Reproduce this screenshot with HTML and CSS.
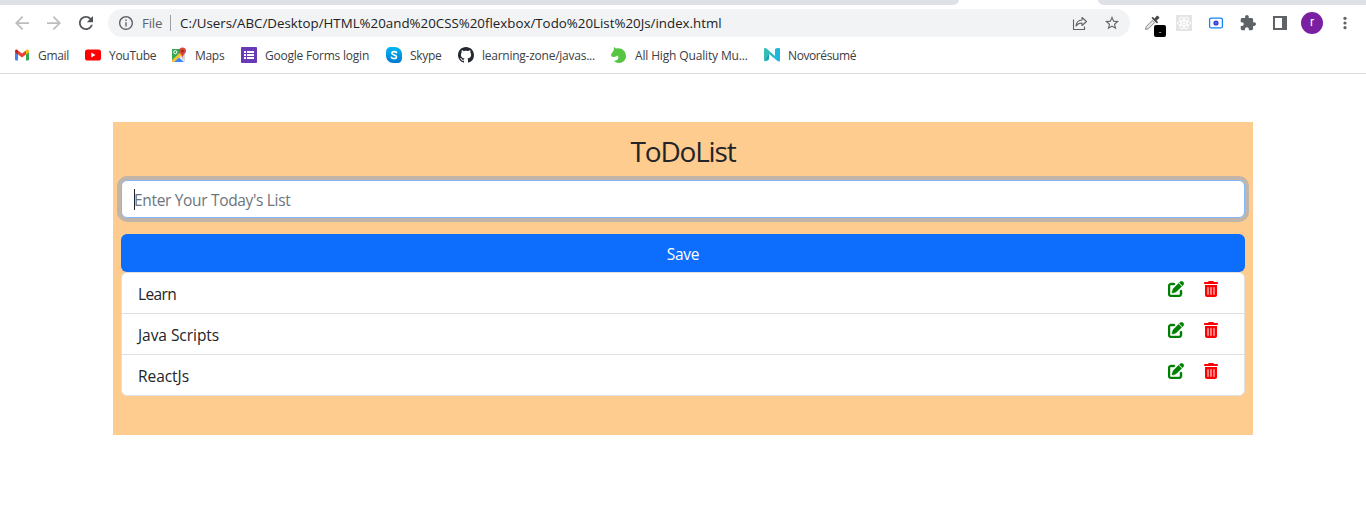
FILE: index.html
```html
<!DOCTYPE html>
<html lang="en">
<head>
<meta charset="utf-8">
<title>ToDoList</title>
<link rel="stylesheet" href="styles.css">
</head>
<body>
<svg class="defs" aria-hidden="true">
  <symbol id="pen" viewBox="0 0 512 512"><path d="M471.6 21.7c-21.9-21.9-57.3-21.9-79.2 0L362.3 51.7l97.9 97.9 30.1-30.1c21.9-21.9 21.9-57.3 0-79.2L471.6 21.7zm-299.2 220c-6.1 6.1-10.8 13.6-13.5 21.9l-29.6 88.8c-2.9 8.6-.6 18.1 5.8 24.6s15.9 8.7 24.6 5.8l88.8-29.6c8.2-2.7 15.7-7.4 21.9-13.5L437.7 172.3 339.7 74.3 172.4 241.7zM96 64C43 64 0 107 0 160V416c0 53 43 96 96 96H352c53 0 96-43 96-96V320c0-17.7-14.3-32-32-32s-32 14.3-32 32v96c0 17.7-14.3 32-32 32H96c-17.7 0-32-14.3-32-32V160c0-17.7 14.3-32 32-32h96c17.7 0 32-14.3 32-32s-14.3-32-32-32H96z"/></symbol>
  <symbol id="trash" viewBox="0 0 448 512"><path d="M135.2 17.7L128 32H32C14.3 32 0 46.3 0 64S14.3 96 32 96H416c17.7 0 32-14.3 32-32s-14.3-32-32-32H320l-7.2-14.3C307.4 6.8 296.3 0 284.2 0H163.8c-12.1 0-23.2 6.8-28.6 17.7zM416 128H32V448c0 35.3 28.7 64 64 64H352c35.3 0 64-28.7 64-64V128zM144 208V432c0 8.8-7.2 16-16 16s-16-7.2-16-16V208c0-8.8 7.2-16 16-16s16 7.2 16 16zm96 0V432c0 8.8-7.2 16-16 16s-16-7.2-16-16V208c0-8.8 7.2-16 16-16s16 7.2 16 16zm96 0V432c0 8.8-7.2 16-16 16s-16-7.2-16-16V208c0-8.8 7.2-16 16-16s16 7.2 16 16z"/></symbol>
</svg>
<header class="chrome">
  <div class="tabs"><div class="tab-left"></div><div class="tab-active"></div><div class="tab-right"></div></div>
  <div class="toolbar">
    <div class="nav">
      <svg class="off" viewBox="4 4 16 16"><path d="M20 11H7.83l5.59-5.59L12 4l-8 8 8 8 1.41-1.41L7.83 13H20v-2z"/></svg>
      <svg class="off" viewBox="4 4 16 16"><path d="M12 4l-1.41 1.41L16.17 11H4v2h12.17l-5.58 5.59L12 20l8-8z"/></svg>
      <svg class="on" viewBox="4 4 16 16"><path d="M17.65 6.35C16.2 4.9 14.21 4 12 4c-4.42 0-7.99 3.58-7.99 8s3.57 8 7.99 8c3.73 0 6.84-2.55 7.73-6h-2.08c-.82 2.33-3.04 4-5.65 4-3.31 0-6-2.69-6-6s2.69-6 6-6c1.66 0 3.14.69 4.22 1.78L13 11h7V4l-2.35 2.35z"/></svg>
    </div>
    <div class="address">
      <svg class="info" viewBox="2 2 20 20"><path d="M11 17h2v-6h-2v6zm1-15C6.48 2 2 6.48 2 12s4.480 10 10 10 10-4.480 10-10S17.520 2 12 2zm0 18c-4.410 0-8-3.590-8-8s3.590-8 8-8 8 3.590 8 8-3.590 8-8 8zM11 9h2V7h-2v2z"/></svg>
      <span class="scheme">File</span>
      <span class="bar"></span>
      <span class="url">C:/Users/ABC/Desktop/HTML%20and%20CSS%20flexbox/Todo%20List%20Js/index.html</span>
      <svg class="share" viewBox="0 0 16 16" fill="none" stroke="#5f6368" stroke-width="1.100"><path d="M1.500 4.500v10h11v-3M10 2.500l4.500 4L10 10.500V8C7 8 5.500 8.700 4 11c.3-3.500 2.500-5.700 6-6z" stroke-linejoin="round"/></svg>
      <svg class="star" viewBox="2 2 20 20"><path d="M22 9.240l-7.190-.62L12 2 9.190 8.630 2 9.240l5.460 4.730L5.820 21 12 17.270 18.180 21l-1.630-7.030L22 9.240zM12 15.400l-3.760 2.270 1-4.280-3.320-2.880 4.380-.38L12 6.100l1.710 4.040 4.380.38-3.320 2.880 1 4.280L12 15.400z"/></svg>
    </div>
    <div class="extensions">
      <div class="picker">
        <svg viewBox="0 0 16 16"><path d="M1.500 14.500l.8-3L8.500 5.300l2.200 2.200-6.200 6.200z" fill="#e4e4e4" stroke="#888" stroke-width="1"/><path d="M7.500 3l5.500 5.500 1.200-1.200L12.500 5.500l2.500-2c1.200-1.200-1.300-3.700-2.500-2.500l-2 2.500-1.800-1.700z" fill="#4a4a4a"/></svg>
        <span class="badge">-</span>
      </div>
      <svg viewBox="0 0 16 16"><path fill="#e4e4e4" d="M0 0h16v16H0z"/><g fill="none" stroke="#fff"><ellipse cx="8" cy="8" rx="6.500" ry="2.500"/><ellipse cx="8" cy="8" rx="6.500" ry="2.500" transform="rotate(60 8 8)"/><ellipse cx="8" cy="8" rx="6.500" ry="2.500" transform="rotate(120 8 8)"/></g><circle cx="8" cy="8" r="1.200" fill="#fff"/></svg>
      <svg viewBox="0 0 16 16"><rect x="1.600" y="3.100" width="12.800" height="9.800" rx="1.500" fill="#fff" stroke="#1683f5" stroke-width="1.300"/><circle cx="8" cy="8" r="2.600" fill="#3840d8"/><circle cx="8" cy="8" r=".8" fill="#8088ff"/></svg>
      <svg viewBox="1 1 22 22" fill="#5f6368"><path d="M20.500 11H19V7c0-1.100-.9-2-2-2h-4V3.500C13 2.120 11.880 1 10.500 1S8 2.120 8 3.500V5H4c-1.100 0-1.990.9-1.990 2v3.800H3.500c1.490 0 2.700 1.210 2.700 2.700s-1.210 2.700-2.700 2.700H2V20c0 1.100.9 2 2 2h3.800v-1.500c0-1.490 1.210-2.700 2.700-2.700s2.700 1.210 2.700 2.700V22H17c1.100 0 2-.9 2-2v-4h1.500c1.380 0 2.500-1.120 2.500-2.500S21.880 11 20.500 11z"/></svg>
      <svg viewBox="0 0 16 16"><path fill="#5f6368" fill-rule="evenodd" d="M1 1h14v14H1zM3 3v10h7V3z"/></svg>
      <div class="avatar">r</div>
      <svg viewBox="0 0 16 16" fill="#5f6368"><circle cx="8" cy="3.300" r="1.600"/><circle cx="8" cy="8" r="1.600"/><circle cx="8" cy="12.700" r="1.600"/></svg>
    </div>
  </div>
  <nav class="bookmarks">
    <a class="gmail"><svg viewBox="0 0 16 16"><path fill="#4285f4" d="M1 5l3 2v6.500H2.200A1.200 1.200 0 0 1 1 12.300z"/><path fill="#34a853" d="M12 7l3-2v7.300a1.200 1.200 0 0 1-1.200 1.200H12z"/><path fill="#ea4335" d="M4 3.500l4 3 4-3v4l-4 3-4-3z"/><path fill="#c5221f" d="M1 4.200c0-1.500 1.500-2 2.500-1.200l.5.500v4L1 5.300z"/><path fill="#fbbc04" d="M15 4.200c0-1.500-1.500-2-2.500-1.200l-.5.500v4l3-2.200z"/></svg><span>Gmail</span></a>
    <a class="youtube"><svg viewBox="0 0 16 16"><rect y="2.500" width="16" height="11" rx="2.600" fill="#f00"/><path fill="#fff" d="M6.300 5.600v4.800L10.500 8z"/></svg><span>YouTube</span></a>
    <a class="maps"><svg viewBox="0 0 16 16"><path fill="#34a853" d="M1 2h11v2L2 14H1z"/><path fill="#fbc02d" d="M1 13L12 3l2 2-6 6-5 4H1z"/><path fill="#4285f4" d="M3 15l5-4.500 5 4.500z"/><path fill="#cfd8dc" d="M9 10l4-4 1 1v8z"/><circle cx="4.300" cy="5.200" r="1.600" fill="none" stroke="#fff"/><path fill="#db4437" d="M11.500.5A3.500 3.500 0 0 0 8 4c0 2.500 3 3.300 3.500 7 .5-3.700 3.500-4.500 3.500-7A3.500 3.500 0 0 0 11.500.5z"/><circle cx="11.500" cy="4" r="1.200" fill="#84261f"/></svg><span>Maps</span></a>
    <a class="forms"><svg viewBox="0 0 16 16"><rect width="16" height="16" rx=".8" fill="#673ab7"/><path fill="#fff" d="M3 4h2v2H3zm3 0h7v2H6zM3 7h2v2H3zm3 0h7v2H6zm-3 3h2v2H3zm3 0h7v2H6z"/></svg><span>Google Forms login</span></a>
    <a class="skype"><svg viewBox="0 0 16 16"><defs><linearGradient id="sky" x2="0" y2="1"><stop stop-color="#00b7f0"/><stop offset="1" stop-color="#0078d4"/></linearGradient></defs><path fill="url(#sky)" d="M4.500 0h4C13 0 16 3.500 16 7.500V11c0 3-2 5-4.500 5h-4C3 16 0 12.500 0 8.500V5c0-3 2-5 4.500-5z"/><path d="M10.500 5.600C10 4.400 5.900 4.100 5.900 6.200c0 2.300 4.600 1.200 4.600 3.500 0 2.400-4.600 2.200-5.100.5" fill="none" stroke="#fff" stroke-width="1.600" stroke-linecap="round"/></svg><span>Skype</span></a>
    <a class="github"><svg viewBox="0 0 16 16"><path fill="#24292f" d="M8 0C3.580 0 0 3.580 0 8c0 3.540 2.290 6.530 5.470 7.590.4.070.55-.17.55-.38 0-.19-.01-.82-.01-1.490-2.010.37-2.530-.49-2.690-.94-.09-.23-.48-.94-.82-1.130-.28-.15-.68-.52-.01-.53.63-.01 1.080.58 1.230.82.72 1.210 1.870.87 2.330.66.07-.52.28-.87.51-1.070-1.780-.2-3.640-.89-3.640-3.950 0-.87.31-1.590.82-2.150-.08-.2-.36-1.020.08-2.120 0 0 .67-.21 2.200.82.64-.18 1.320-.27 2-.27s1.360.09 2 .27c1.530-1.040 2.200-.82 2.200-.82.44 1.100.16 1.920.08 2.120.51.56.82 1.270.82 2.150 0 3.070-1.870 3.750-3.650 3.950.29.25.54.73.54 1.480 0 1.070-.01 1.930-.01 2.200 0 .21.15.46.55.38A8.010 8.010 0 0 0 16 8c0-4.420-3.580-8-8-8z"/></svg><span>learning-zone/javas...</span></a>
    <a class="quality"><svg viewBox="0 0 16 16"><path fill="#57c443" d="M3 0l2 1.500C10.500.300 15 4 15 9c0 4-3 7-7 7-2.200 0-4-.8-5-2.200 2.500.2 4.500-1.300 4.300-3.300L7 8.500 3.500 10 .8 9.800 0 7.500l2.700-4.200z"/></svg><span>All High Quality Mu...</span></a>
    <a class="novo"><svg viewBox="0 0 16 16"><defs><linearGradient id="nv"><stop stop-color="#39bfae"/><stop offset="1" stop-color="#18b5e5"/></linearGradient></defs><path fill="url(#nv)" d="M0 2.500C0 1 1.500.7 2.500 1.600L11 9V2.500C11 1 16 .5 16 2v11c0 1.700-1.500 1.800-2.500 1L5 7v5c0 2-5 3.500-5 1z"/><path d="M1 14l4-3V7.500z" fill="#1695b0"/></svg><span>Novorésumé</span></a>
  </nav>
</header>
<main class="todo">
  <h1><span>ToDoList</span></h1>
  <div class="field"><i class="caret"></i><span>Enter Your Today's List</span></div>
  <button class="save">Save</button>
  <ul class="list">
    <li><span class="learn">Learn</span><div class="actions"><svg class="edit"><use href="#pen"/></svg><svg class="delete"><use href="#trash"/></svg></div></li>
    <li><span class="java">Java Scripts</span><div class="actions"><svg class="edit"><use href="#pen"/></svg><svg class="delete"><use href="#trash"/></svg></div></li>
    <li><span class="react">ReactJs</span><div class="actions"><svg class="edit"><use href="#pen"/></svg><svg class="delete"><use href="#trash"/></svg></div></li>
  </ul>
</main>
</body>
</html>
```
FILE: styles.css
```css
* { box-sizing: border-box; }
body { margin: 0; height: 523px; overflow: hidden; background: #fff; font-family: "Open Sans", "Noto Sans", sans-serif; color: #212529; }
.defs { display: none; }
svg { display: block; flex: none; }
span { white-space: nowrap; }

.chrome { height: 74px; border-bottom: 1px solid #dadce0; }
.tabs { display: flex; height: 5px; }
.tab-left { width: 959px; background: #dee1e6; border-bottom-right-radius: 6px 5px; }
.tab-active { width: 139px; }
.tab-right { flex: 1; background: #dee1e6; border-bottom-left-radius: 6px 5px; }

.toolbar { display: flex; height: 36px; align-items: center; }
.nav { display: flex; flex: none; gap: 18px; width: 108px; padding-left: 15px; }
.nav svg { width: 14px; height: 14px; }
.off { fill: #bbbdbf; }
.on { fill: #505357; }
.address { display: flex; flex: none; align-items: center; width: 1022px; height: 28px; padding: 0 11px; border-radius: 14px; background: #f1f3f4; font-size: 13.300px; }
.info { width: 14px; height: 14px; fill: #5f6368; margin-right: 9px; }
.scheme { width: 28px; color: #5f6368; letter-spacing: -.2px; }
.bar { width: 1px; height: 16px; margin-right: 9px; background: #9aa0a6; }
.url { flex: 1; color: #202124; letter-spacing: .01px; }
.share { width: 16px; height: 16px; margin-right: 17px; }
.star { width: 14px; height: 14px; fill: #5f6368; }
.extensions { display: flex; flex: none; align-items: center; padding-left: 14px; }
.extensions > svg, .picker { width: 16px; height: 16px; margin-right: 16px; }
.extensions > svg:last-child { margin-right: 0; }
.picker { position: relative; }
.picker svg { width: 16px; height: 16px; }
.badge { position: absolute; left: 10px; top: 10px; width: 12px; height: 12px; border-radius: 2px; background: #000; color: #fff; font-size: 8px; line-height: 11px; text-align: center; }
.avatar { width: 22px; height: 22px; margin: 0 14px 0 -3px; border-radius: 50%; background: #7b1fa2; color: #fff; font: 12px/21px Roboto, sans-serif; text-align: center; }

.bookmarks { display: flex; height: 28px; align-items: center; padding-left: 14px; font-size: 12px; color: #3c4043; letter-spacing: -.3px; }
.bookmarks a { display: flex; align-items: center; gap: 8px; flex: none; }
.bookmarks svg { width: 16px; height: 16px; }
.gmail { width: 71px; }
.youtube { width: 86px; }
.maps { width: 70px; }
.forms { width: 145px; letter-spacing: -.22px; }
.skype { width: 72px; }
.github { width: 153px; letter-spacing: -.25px; }
.quality { width: 153px; letter-spacing: -.15px; }
.novo { letter-spacing: -.4px; }

.todo { width: 1140px; height: 313px; margin: 48px auto 0; padding: 11px 8px 0; background: #fecc8f; }
h1 { margin: 0; height: 47px; font-size: 28px; font-weight: 400; line-height: 36px; text-align: center; letter-spacing: -1.200px; }
.field { display: flex; align-items: center; height: 38px; padding: 0 12px; border: 1px solid #86b7fe; border-radius: 6px; background: #fff; box-shadow: 0 0 0 4px rgba(13, 110, 253, .25); font-size: 15.500px; color: #6c757d; letter-spacing: -.33px; }
.field span { padding-top: 1px; }
.caret { width: 1px; height: 21px; margin-right: -1px; background: #212529; }
.save { display: block; width: 100%; height: 38px; margin-top: 16px; padding: 1px 0 0; border: 0; border-radius: 6px; background: #0d6efd; color: #fff; font: 15.500px "Open Sans", sans-serif; letter-spacing: -.3px; }
.list { margin: 0; padding: 0; list-style: none; border: 1px solid #dfe0e1; border-radius: 6px; background: #fff; font-size: 15.500px; }
.list li { display: flex; justify-content: space-between; height: 41px; padding: 8px 26px 0 16px; line-height: 26px; border-bottom: 1px solid #dfe0e1; }
.list li:last-child { height: 40px; border-bottom: 0; }
.learn { letter-spacing: -.6px; }
.java, .react { letter-spacing: -.05px; }
.actions { display: flex; gap: 20px; }
.edit { width: 16px; height: 16px; fill: green; stroke: green; stroke-width: 14px; }
.delete { width: 14px; height: 16px; fill: red; }
```
